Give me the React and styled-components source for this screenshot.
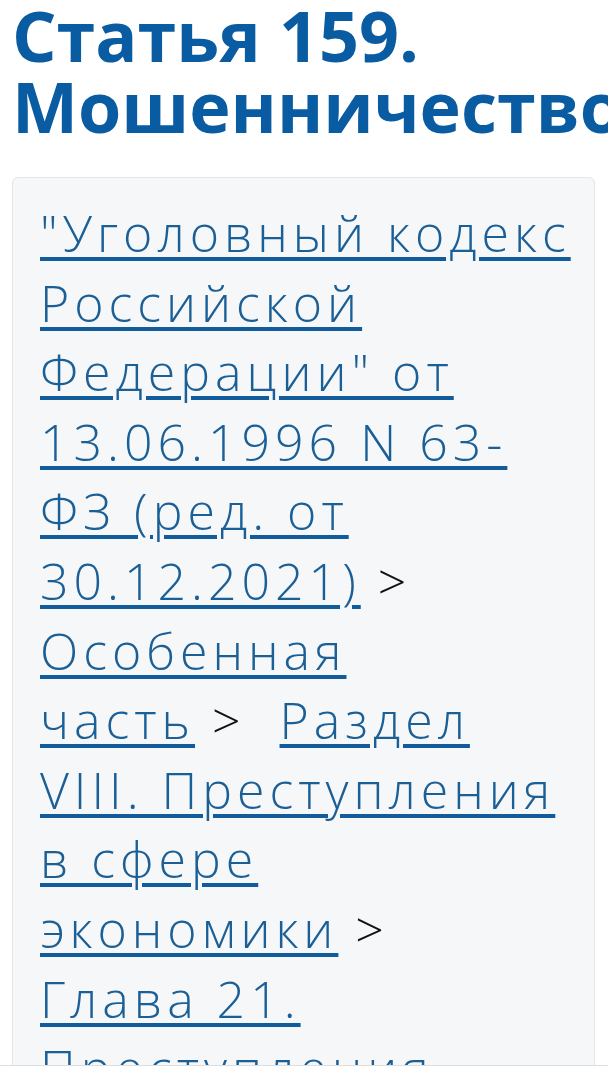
import React from "react";
import styled, { createGlobalStyle } from "styled-components";

const Global = createGlobalStyle`
  html, body {
    margin: 0;
    padding: 0;
    background: #ffffff;
    overflow-x: hidden;
  }
  body {
    font-family: "Open Sans", "Noto Sans", sans-serif;
  }
`;

const Page = styled.main`
  padding: 0 13px 0 12px;
`;

const Title = styled.h1`
  margin: 0;
  font-size: 70px;
  line-height: 71px;
  font-weight: 700;
  color: #0a5ca2;
  white-space: nowrap;
`;

const Crumbs = styled.nav`
  margin-top: 35px;
  background: #f6f7f8;
  border: 1px solid #e4e5e7;
  border-radius: 6px;
  padding: 21px 22px 40px 27px;
  font-size: 50px;
  line-height: 69.6px;
  font-weight: 300;
  letter-spacing: 5px;
  color: #1c1c1c;
`;

const Link = styled.a`
  color: #1b5f97;
  text-decoration: underline;
  text-decoration-thickness: 4px;
  text-underline-offset: 5px;
  text-decoration-color: #125c9b;
  text-decoration-skip-ink: auto;
`;

const Sep = styled.span`
  color: #111111;
  letter-spacing: 4px;
`;

const BottomBar = styled.div`
  position: fixed;
  left: 0;
  right: 0;
  bottom: 0;
  height: 14px;
  background: #ffffff;
  border-top: 1px solid #dedede;
`;

const crumbs = [
  "\"Уголовный кодекс Российской Федерации\" от 13.06.1996 N 63-ФЗ (ред. от 30.12.2021)",
  "Особенная часть",
  "Раздел VIII. Преступления в сфере экономики",
  "Глава 21. Преступления против собственности",
];

const App = () => {
  return (
    <Page>
      <Global />
      <Title>
        Статья 159.
        <br />
        Мошенничество
      </Title>
      <Crumbs>
        {crumbs.map((c, i) => (
          <React.Fragment key={i}>
            <Link href="#">{c}</Link>
            {i < crumbs.length - 1 && (
              <>
                <Sep>{"\u00a0>\u00a0"}</Sep>{" "}
              </>
            )}
          </React.Fragment>
        ))}
      </Crumbs>
      <BottomBar />
    </Page>
  );
};

export default App;
